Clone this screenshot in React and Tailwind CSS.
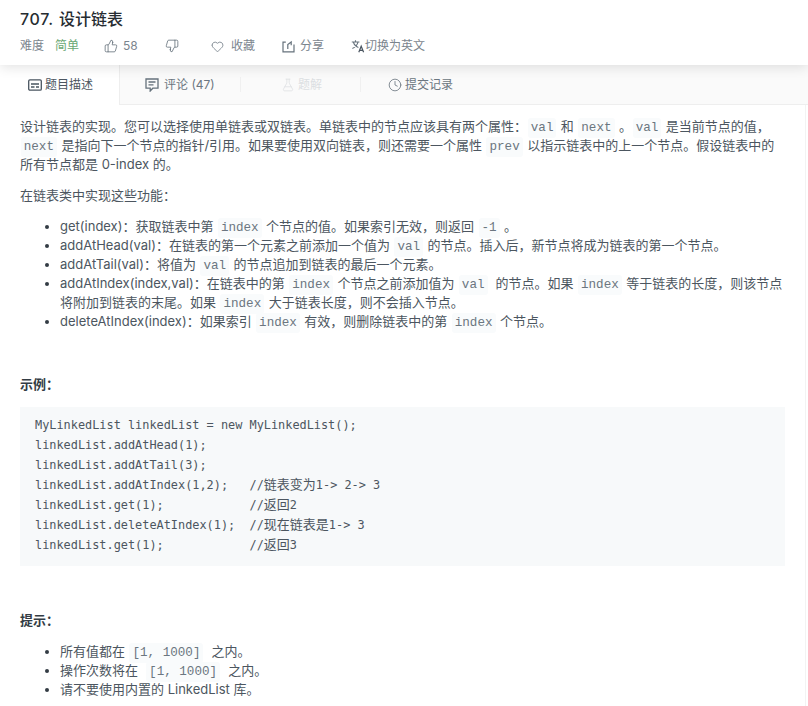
import { ThumbsUp, ThumbsDown, Heart, FlaskConical, Clock } from "lucide-react";

const FONT = "font-['Inter','Noto_Sans_CJK_SC',sans-serif]";

function Code({ children }) {
  return (
    <code className="font-['Liberation_Mono','Noto_Sans_CJK_SC',monospace] text-[12.6px] leading-none text-[#6b7680] bg-[#f9fbfc] px-[3px] py-[3px] mx-[0.75px] rounded-[3px]">
      {children}
    </code>
  );
}

function ShareIcon() {
  return (
    <svg width="13" height="13" viewBox="0 0 13 13" fill="none" stroke="#66727c" strokeWidth="1.2">
      <path d="M3.8 2.2H1v9.6h11V4.5" />
      <path d="M5.8 9V4.6L9.2 2v3.2" />
    </svg>
  );
}

function TranslateIcon() {
  return (
    <svg width="14" height="14" viewBox="0 0 14 14" fill="none" stroke="#66727c" strokeWidth="1.1">
      <path d="M0.8 3h7.6M4.5 1.2V3M7 3C6.4 6 4.4 8 1.4 9.6M2.4 3c.6 2.4 2.4 4.4 5 5.4" />
      <path d="M7.8 13.2l2.4-6 2.4 6M8.6 11.4h3.2" stroke="#4a5560" strokeWidth="1.2" />
    </svg>
  );
}

function DescIcon() {
  return (
    <svg width="14" height="12" viewBox="0 0 14 12" fill="none" stroke="#4a5560" strokeWidth="1.3">
      <rect x="0.7" y="0.9" width="12.6" height="10.2" rx="1.2" />
      <path d="M3 5h8M3 8h3.5M8 8h3" />
    </svg>
  );
}

function CommentIcon() {
  return (
    <svg width="14" height="14" viewBox="0 0 14 14" fill="none" stroke="#66727c" strokeWidth="1.3">
      <path d="M1 1h12v9.2H7.8L5.2 13v-2.8H1z" />
      <path d="M3.5 4h7M3.5 6.8h5" />
    </svg>
  );
}

function Tab({ className, icon, children, textColor = "text-[#6b7680]" }) {
  return (
    <div className={`flex items-center text-[12px] ${textColor} ${className}`}>
      {icon}
      <span>{children}</span>
    </div>
  );
}

function Sep() {
  return <div className="w-px h-[15px] bg-[#f0f0f0]" />;
}

function Li({ children }) {
  return (
    <li className="flex leading-[19px]">
      <span className="w-[4px] h-[19px] mr-[11px] flex items-center">
        <span className="w-[4px] h-[4px] rounded-full bg-[#333c44]" />
      </span>
      <span className="whitespace-pre">{children}</span>
    </li>
  );
}

function Zh({ children }) {
  return <span className="text-[13px] leading-none">{children}</span>;
}

export default function App() {
  return (
    <div className={`w-[808px] h-[706px] overflow-hidden bg-white text-[13px] text-[#4c5660] ${FONT}`}>
      {/* header */}
      <div className="relative z-10 h-[65px] bg-white px-5 pt-[9px] shadow-[0_2px_12px_rgba(0,0,0,0.12)]">
        <h1 className="text-[16px] leading-[21px] font-medium text-[#262c31]">
          <span className="tracking-[0.7px] mr-[1px]">707.</span> 设计链表
        </h1>
        <div className="mt-[6px] flex items-center h-[20px] text-[12px] text-[#7b858e]">
          <span className="w-[35px]">难度</span>
          <span className="w-[49px] text-[#6aa874]">简单</span>
          <ThumbsUp size={14} strokeWidth={1.4} className="text-[#66727c] mr-[5px]" />
          <span className="w-[42px]">58</span>
          <ThumbsDown size={14} strokeWidth={1.4} className="text-[#66727c] mr-[32px]" />
          <Heart size={13} strokeWidth={1.4} className="text-[#66727c] mr-[7px]" />
          <span className="w-[51px]">收藏</span>
          <ShareIcon />
          <span className="ml-[5px] w-[51px]">分享</span>
          <TranslateIcon />
          <span>切换为英文</span>
        </div>
      </div>

      {/* tabs */}
      <div className="flex items-center h-[40px] bg-[#fafafa] border-b border-[#eeeeee]">
        <Tab className="w-[120px] h-[40px] pl-[28px] gap-[3px] bg-white border-r border-[#eeeeee]" textColor="text-[#4c5660]" icon={<DescIcon />}>
          题目描述
        </Tab>
        <Tab className="w-[120px] pl-[25px] gap-[5px]" icon={<CommentIcon />}>
          评论 (47)
        </Tab>
        <Sep />
        <Tab className="w-[119px] pl-[40px] gap-[3px]" textColor="text-[#dcdfe2]" icon={<FlaskConical size={14} strokeWidth={1.3} />}>
          题解
        </Tab>
        <Sep />
        <Tab className="pl-[27px] gap-[3px]" icon={<Clock size={14} strokeWidth={1.4} />}>
          提交记录
        </Tab>
      </div>

      {/* content */}
      <div className="w-[806px] h-[601px] border-r border-[#f3f3f3] px-5 pt-[12px] leading-[19px]">
        <p className="whitespace-pre">
          设计链表的实现。您可以选择使用单链表或双链表。单链表中的节点应该具有两个属性：<Code>val</Code> 和 <Code>next</Code> 。<Code>val</Code> 是当前节点的值，
        </p>
        <p className="whitespace-pre">
          <Code>next</Code> 是指向下一个节点的指针/引用。如果要使用双向链表，则还需要一个属性 <Code>prev</Code> 以指示链表中的上一个节点。假设链表中的
        </p>
        <p>所有节点都是 0-index 的。</p>

        <p className="mt-[12px]">在链表类中实现这些功能：</p>

        <ul className="mt-[12px] pl-[25px]">
          <Li>get(index)：获取链表中第 <Code>index</Code> 个节点的值。如果索引无效，则返回 <Code>-1</Code> 。</Li>
          <Li>addAtHead(val)：在链表的第一个元素之前添加一个值为 <Code>val</Code> 的节点。插入后，新节点将成为链表的第一个节点。</Li>
          <Li>addAtTail(val)：将值为 <Code>val</Code> 的节点追加到链表的最后一个元素。</Li>
          <Li>
            addAtIndex(index,val)：在链表中的第 <Code>index</Code> 个节点之前添加值为 <Code>val</Code>  的节点。如果 <Code>index</Code> 等于链表的长度，则该节点
            <br />
            将附加到链表的末尾。如果 <Code>index</Code> 大于链表长度，则不会插入节点。
          </Li>
          <Li>deleteAtIndex(index)：如果索引 <Code>index</Code> 有效，则删除链表中的第 <Code>index</Code> 个节点。</Li>
        </ul>

        <p className="mt-[44px] font-semibold text-[#333c44]">示例：</p>

        <pre className="mt-[13px] w-[765px] h-[159px] bg-[#f7f9fa] px-[15px] py-[8px] text-[11.88px] leading-[20px] text-[#4c5660] font-['DejaVu_Sans_Mono','Noto_Sans_CJK_SC',monospace]">
          MyLinkedList linkedList = new MyLinkedList();{"\n"}
          linkedList.addAtHead(1);{"\n"}
          linkedList.addAtTail(3);{"\n"}
          linkedList.addAtIndex(1,2);{"   "}//<Zh>链表变为</Zh>1-&gt; 2-&gt; 3{"\n"}
          linkedList.get(1);{"            "}//<Zh>返回</Zh>2{"\n"}
          linkedList.deleteAtIndex(1);{"  "}//<Zh>现在链表是</Zh>1-&gt; 3{"\n"}
          linkedList.get(1);{"            "}//<Zh>返回</Zh>3
        </pre>

        <p className="mt-[45px] font-semibold text-[#333c44]">提示：</p>

        <ul className="mt-[12px] pl-[25px]">
          <Li>所有值都在 <Code>[1, 1000]</Code>  之内。</Li>
          <Li>操作次数将在  <Code>[1, 1000]</Code>  之内。</Li>
          <Li>请不要使用内置的 LinkedList 库。</Li>
        </ul>
      </div>
    </div>
  );
}
